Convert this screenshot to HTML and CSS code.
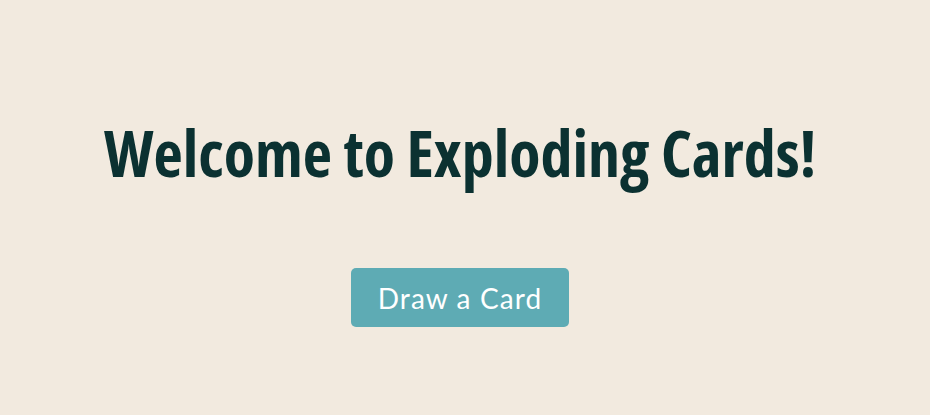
FILE: index.html
```html
<!DOCTYPE html>
<html lang="en">
<head>
<meta charset="utf-8">
<title>Exploding Cards</title>
<link rel="stylesheet" href="styles.css">
</head>
<body>
<main class="page">
  <h1 class="title">Welcome to Exploding Cards!</h1>
  <button class="draw-btn" type="button">Draw a Card</button>
</main>
</body>
</html>
```

FILE: styles.css
```css
html, body {
  margin: 0;
  padding: 0;
}
body {
  background: #f2eadf;
  width: 930px;
  height: 415px;
  overflow: hidden;
}
.page {
  display: flex;
  flex-direction: column;
  align-items: center;
  padding-top: 113px;
  padding-right: 10px;
}
.title {
  margin: 0;
  font-family: "Open Sans", "Liberation Sans", sans-serif;
  font-stretch: 77%;
  font-weight: 700;
  font-size: 64px;
  line-height: 80px;
  color: #0b3131;
  letter-spacing: 0;
}
.draw-btn {
  margin-top: 75px;
  width: 218px;
  height: 59px;
  border: none;
  border-radius: 5px;
  background: #5eabb4;
  color: #ffffff;
  font-family: "Lato", "Open Sans", sans-serif;
  font-weight: 400;
  font-size: 28px;
  letter-spacing: 1.1px;
  padding: 0;
}
```
